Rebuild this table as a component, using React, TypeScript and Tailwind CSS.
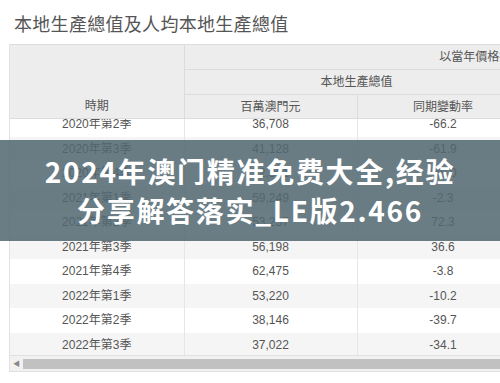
import React from "react";

const rows: [string, string, string][] = [
  ["2020年第2季", "36,708", "-66.2"],
  ["2020年第3季", "41,128", "-61.9"],
  ["2020年第4季", "52,361", "-48.0"],
  ["2021年第1季", "59,249", "-2.3"],
  ["2021年第2季", "53,237", "72.3"],
  ["2021年第3季", "56,198", "36.6"],
  ["2021年第4季", "62,475", "-3.8"],
  ["2022年第1季", "53,220", "-10.2"],
  ["2022年第2季", "38,146", "-39.7"],
  ["2022年第3季", "37,022", "-34.1"],
];

function Cols() {
  return (
    <colgroup>
      <col className="w-[174px]" />
      <col className="w-[173px]" />
      <col className="w-[172px]" />
      <col className="w-[173px]" />
      <col className="w-[172px]" />
    </colgroup>
  );
}

export default function App() {
  return (
    <div className="relative w-[500px] h-[383px] overflow-hidden bg-white font-['Liberation_Sans','Noto_Sans_CJK_TC',sans-serif] text-[#555]">
      <div className="h-[44px] pl-[14px] pt-[14px] text-[18px] leading-[22px] text-[#555] tracking-[0.3px]">
        本地生產總值及人均本地生產總值
      </div>
      <div className="ml-[9px] w-[864px] border-l border-[#e2e2e2]">
        <table className="table-fixed border-collapse w-[864px] text-[12px] bg-[#ededed]">
          <Cols />
          <tbody>
            <tr className="h-[25px]">
              <td rowSpan={3} className="align-bottom text-center pb-[3px] border-r border-t border-b border-[#dcdcdc]">時期</td>
              <td colSpan={4} className="text-center border-t border-b border-[#dcdcdc]">以當年價格按支出法計算生產總值</td>
            </tr>
            <tr className="h-[25px]">
              <td colSpan={2} className="text-center border-b border-r border-[#dcdcdc]">本地生產總值</td>
              <td colSpan={2} className="text-center border-b border-[#dcdcdc]">人均本地生產總值</td>
            </tr>
            <tr className="h-[24px]">
              <td className="text-center border-r border-b border-[#dcdcdc]">百萬澳門元</td>
              <td className="text-center border-r border-b border-[#dcdcdc]">同期變動率</td>
              <td className="text-center border-r border-b border-[#dcdcdc]">澳門元</td>
              <td className="text-center border-b border-[#dcdcdc]">同期變動率</td>
            </tr>
          </tbody>
        </table>
        <div className="h-[236px] overflow-hidden">
          <table className="table-fixed border-collapse w-[864px] text-[12px] -mt-[7px]">
            <Cols />
            <tbody>
              {rows.map((r, i) => (
                <tr key={r[0]} className={i % 2 === 1 ? "h-[24.5px] bg-[#f5f5f5]" : "h-[24.5px] bg-white"}>
                  <td className="text-center border-r border-[#e6e6e6]">{r[0]}</td>
                  <td className="text-center border-r border-[#e6e6e6]">{r[1]}</td>
                  <td className="text-center border-r border-[#e6e6e6]">{r[2]}</td>
                  <td className="text-center border-r border-[#e6e6e6]"></td>
                  <td className="text-center"></td>
                </tr>
              ))}
            </tbody>
          </table>
        </div>
        <div className="h-[17px] border-t border-b border-[#e0e0e0] bg-[#f1f1f1] flex items-center">
          <span className="w-[13px] text-[7px] leading-none text-[#888] text-center">◀</span>
          <div className="h-[10px] flex-1 bg-[#c1c1c1]"></div>
        </div>
      </div>
      <div className="absolute left-0 right-0 top-[140px] h-[101px] bg-[rgba(82,104,113,0.86)] flex flex-col items-center justify-center font-['Noto_Sans_CJK_SC',sans-serif] font-bold text-white text-[28px] leading-[39px] tracking-[1.7px]">
        <div>2024年澳门精准免费大全,经验</div>
        <div>分享解答落实_LE版2.466</div>
      </div>
    </div>
  );
}
